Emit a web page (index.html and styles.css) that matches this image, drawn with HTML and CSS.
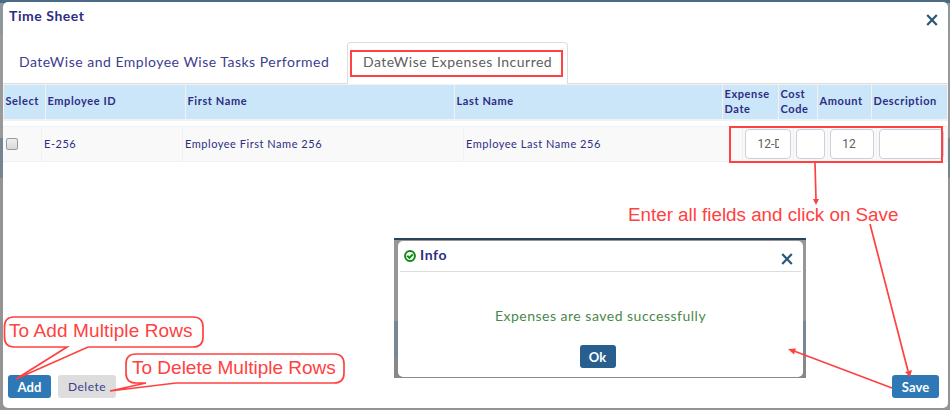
FILE: index.html
```html
<!DOCTYPE html>
<html lang="en">
<head>
<meta charset="utf-8">
<title>Time Sheet</title>
<link rel="stylesheet" href="styles.css">
</head>
<body>
<main class="modal">
  <header class="modal-head">
    <h1 class="title">Time Sheet</h1>
    <svg class="close" viewBox="0 0 12 12"><path d="M1.2 1L10.8 11M10.8 1L1.2 11"/></svg>
  </header>
  <nav class="tabs">
    <a class="tab">DateWise and Employee Wise Tasks Performed</a>
    <a class="tab active">DateWise Expenses Incurred</a>
  </nav>
  <section class="grid-head">
    <div>Select</div><div>Employee ID</div><div>First Name</div><div>Last Name</div><div>Expense<br>Date</div><div>Cost<br>Code</div><div>Amount</div><div>Description</div>
  </section>
  <section class="grid-row">
    <div><i class="check"></i></div><div>E-256</div><div>Employee First Name 256</div><div>Employee Last Name 256</div>
    <div><span class="input"><span class="clip">12-D</span></span></div><div><span class="input"></span></div><div><span class="input amount">12</span></div><div><span class="input"></span></div>
  </section>
  <footer class="actions">
    <button class="btn add">Add</button>
    <button class="btn delete">Delete</button>
    <button class="btn save">Save</button>
  </footer>
</main>
<section class="info-shot">
  <div class="info">
    <header class="info-head">
      <svg class="ok-icon" viewBox="0 0 12 12"><circle cx="6" cy="6" r="4.9"/><path d="M3.3 5.800L5.400 7.900L8.800 4.400"/></svg>
      <h2 class="info-title">Info</h2>
      <svg class="close" viewBox="0 0 12 12"><path d="M1.2 1L10.8 11M10.8 1L1.2 11"/></svg>
    </header>
    <p class="message">Expenses are saved successfully</p>
    <button class="btn ok">Ok</button>
  </div>
</section>
<svg class="marks" viewBox="0 0 950 410">
  <g class="line">
    <rect x="351" y="51" width="211" height="25"/>
    <rect x="730" y="127" width="212" height="35"/>
    <path d="M815 163L816 200M870 224L908 371M892 388L794 351"/>
    <path class="bubble" d="M14 317H193Q203 317 203 327V337Q203 347 193 347H88L16 379L67 347H14Q4.500 347 4.500 337V327Q4.500 317 14 317Z"/>
    <path class="bubble" d="M136 354H334Q344 354 344 364V373Q344 383 334 383H176L110 391L146 383H136Q126 383 126 373V364Q126 354 136 354Z"/>
  </g>
  <g class="tip">
    <path d="M813 199H819L816 205Z"/>
    <path d="M905 372L912 370L910 377Z"/>
    <path d="M788 349L796 348.500L794 354.500Z"/>
  </g>
</svg>
<p class="note note-save">Enter all fields and click on Save</p>
<p class="note note-add">To Add Multiple Rows</p>
<p class="note note-delete">To Delete Multiple Rows</p>
</body>
</html>
```
FILE: styles.css
```css
* { box-sizing: border-box; }
body {
  margin: 0;
  width: 950px;
  height: 410px;
  padding: 2px 2px 2px 3px;
  overflow: hidden;
  position: relative;
  font-family: Lato, "Liberation Sans", sans-serif;
  color: #2d2d83;
  background: linear-gradient(#4a6b86 3px, #8f979b 3px, #8f979b 34px, #999 34px, #999 138px, #75858f 138px, #75858f 178px, #949494 178px);
}
h1, h2, p { margin: 0; }
.modal {
  height: 406px;
  background: #fff;
  border-radius: 5px;
  display: flex;
  flex-direction: column;
}
.modal-head { height: 40px; padding: 5px 10px 0 6px; display: flex; justify-content: space-between; }
.title { font-size: 14px; line-height: 17px; font-weight: 700; letter-spacing: .55px; }
.close { width: 12px; height: 12px; fill: none; stroke: #2b5876; stroke-width: 2.2; }
.modal-head .close { margin-top: 7px; }
.tabs { height: 42px; display: flex; border-bottom: 1px solid #ddd; }
.tab { font-size: 14px; line-height: 39px; letter-spacing: .5px; white-space: nowrap; padding-left: 16px; width: 344px; color: #3d3d8f; }
.tab.active { width: 221px; height: 42px; line-height: 37px; padding-left: 15px; color: #606060; background: #fff; border: 1px solid #ddd; border-bottom: 0; border-radius: 4px 4px 0 0; }
.grid-head {
  height: 37px;
  padding: 1px 1px 2px;
  background: #f2f2f2;
  display: grid;
  grid-template-columns: 41px 139px 268px 267px 55px 38px 53px 75px;
  column-gap: 1px;
  font-size: 11px;
  line-height: 15px;
  font-weight: 700;
  letter-spacing: .6px;
}
.grid-head div { background: #cbe6f9; padding: 0 0 3px 1.5px; display: flex; align-items: center; white-space: nowrap; }
.grid-row {
  height: 36px;
  margin-top: 5px;
  border-top: 1px solid #f1f1f1;
  border-bottom: 1px solid #f1f1f1;
  background: #f9f9f9;
  display: grid;
  grid-template-columns: 39px 141px 281px 279px 51px 34px 49px 71px;
  font-size: 11px;
  letter-spacing: .53px;
}
.grid-row div { border-right: 1px solid #f1f1f1; padding: 0 0 3px 2px; display: flex; align-items: center; white-space: nowrap; }
.check { width: 12px; height: 12px; margin: 1px 0 0 1px; border: 1px solid #999; border-radius: 2px; background: linear-gradient(#eee, #d9d9d9); }
.input { display: flex; align-items: center; justify-content: center; width: calc(100% - 2px); height: 30px; margin-top: 2px; border: 1px solid #ccd0dc; border-radius: 4px; background: #fff; color: #606060; font: 12px Roboto, sans-serif; letter-spacing: 0; }
.grid-row div:last-child .input { width: calc(100% - 3px); }
.amount { padding-right: 6px; }
.clip { width: 21px; overflow: hidden; }
.actions { margin-top: auto; height: 33px; padding: 0 9px 9px 5px; display: flex; }
.btn { height: 23px; padding: 0; border: 0; border-radius: 3px; color: #fff; background: #2e79b5; font: 700 13px Lato, sans-serif; letter-spacing: .1px; }
.add { width: 43px; }
.delete { width: 58px; margin-left: 7px; color: #3d3d8f; background: #ddd; font-size: 12px; font-weight: 400; letter-spacing: .5px; }
.save { width: 47px; margin-left: auto; }
.info-shot {
  position: absolute;
  left: 394px;
  top: 238px;
  width: 412px;
  height: 140px;
  padding: 3px 3px 1px 4px;
  border-top: 2px solid #2b4459;
  background: linear-gradient(#969696 81px, #788893 81px, #788893 117px, #888 117px);
}
.info { height: 136px; margin-top: -2px; background: #fff; border-radius: 5px; display: flex; flex-direction: column; align-items: center; }
.info-head { width: 401px; height: 31px; border-bottom: 1px solid #ddd; display: flex; padding: 9px 8px 0 4px; }
.ok-icon { width: 12px; height: 12px; fill: none; stroke: #0a8a16; stroke-width: 2; }
.info-title { margin: -4px auto 0 4px; font-size: 14px; line-height: 17px; letter-spacing: .6px; }
.info-head .close { margin-top: 3px; }
.message { margin-top: 35px; font-size: 14px; line-height: 18px; letter-spacing: .5px; color: #4a884a; }
.ok { width: 36px; margin: 20px 6px 0 0; background: #285f8f; }
.marks { position: absolute; left: 0; top: 0; width: 950px; height: 410px; }
.line { fill: none; stroke: #ff4141; stroke-width: 2; }
.line path { stroke-width: 1.7; }
.bubble { fill: #fff; }
.tip { fill: #ff4141; }
.note { position: absolute; font: 19px/20px "Liberation Sans", Arial, sans-serif; color: #ff4141; white-space: nowrap; }
.note-save { left: 628px; top: 205px; font-size: 18.8px; }
.note-add { left: 9px; top: 321px; letter-spacing: .1px; }
.note-delete { left: 132px; top: 358px; }
```
